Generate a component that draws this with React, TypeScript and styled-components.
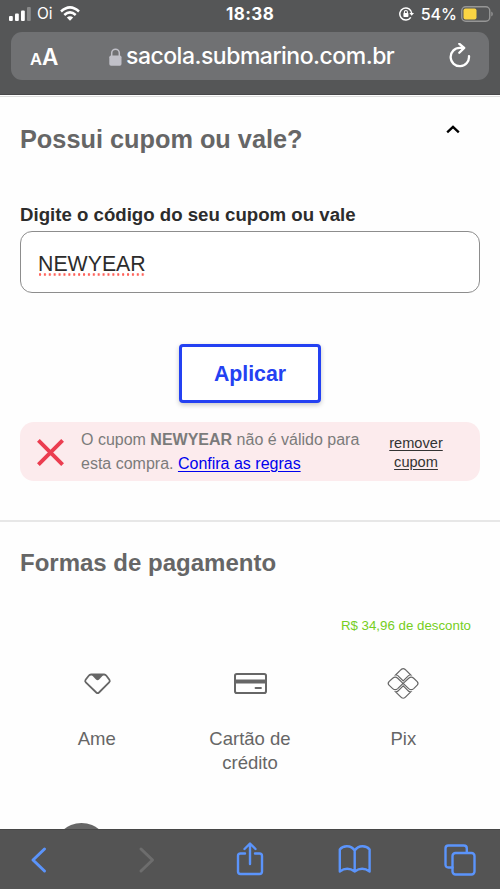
import React from "react";
import styled, { createGlobalStyle } from "styled-components";

const GlobalStyle = createGlobalStyle`
  * { box-sizing: border-box; }
  body { margin: 0; background: #fff; font-family: "Liberation Sans", Arial, sans-serif; }
  h2, p { margin: 0; }
  svg { display: block; flex: none; }
  button { padding: 0; border: 0; background: none; font: inherit; color: inherit; }
`;

const Screen = styled.div`
  width: 500px;
  height: 889px;
  display: flex;
  flex-direction: column;
  overflow: hidden;
  background: #fefefe;
`;

const BrowserHeader = styled.header`
  height: 95px;
  flex: none;
  background: #555657;
  border-bottom: 1px solid #48484a;
  color: #fff;
  font-family: Inter, sans-serif;
`;

const StatusBar = styled.div`
  height: 32px;
  padding: 0 7px 5px 9px;
  display: grid;
  grid-template-columns: 1fr 50px 1fr;
  align-items: center;
`;

const StatusGroup = styled.div<{ $end?: boolean }>`
  display: flex;
  align-items: center;
  justify-content: ${(p) => (p.$end ? "flex-end" : "flex-start")};
`;

const Carrier = styled.span`
  margin: 0 7px 0 6px;
  font-size: 15.5px;
  line-height: 20px;
`;

const Clock = styled.span`
  font-size: 17px;
  line-height: 20px;
  font-weight: 700;
  letter-spacing: 0.4px;
  white-space: nowrap;
`;

const BatteryLevel = styled.span`
  margin: 0 4px 0 7px;
  font-size: 16px;
  line-height: 20px;
  font-weight: 500;
`;

const AddressBar = styled.div`
  height: 48px;
  margin: 0 11px;
  padding: 0 18px 0 19px;
  border-radius: 11px;
  background: #707173;
  display: grid;
  grid-template-columns: 79px 1fr 22px;
  align-items: center;
`;

const TextSize = styled.button`
  padding-top: 3px;
  display: flex;
  align-items: baseline;
  font-size: 22.5px;
  font-weight: 600;
  line-height: 28px;
`;

const SmallA = styled.span`
  font-size: 16.5px;
`;

const Address = styled.div`
  display: flex;
  align-items: center;
  gap: 4px;
`;

const Host = styled.span`
  font-size: 23px;
  line-height: 28px;
  font-weight: 500;
  letter-spacing: -0.5px;
  white-space: nowrap;
`;

const Page = styled.main`
  height: 734px;
  flex: none;
  display: flex;
  flex-direction: column;
  background: #fefefe;
`;

const CouponSection = styled.section`
  height: 426px;
  margin-top: 1px;
  padding: 0 20px;
  border-top: 1px solid #ddd;
  border-bottom: 2px solid #e7e7e7;
  display: flex;
  flex-direction: column;
`;

const SectionHeader = styled.div`
  height: 107px;
  padding: 27px 20px 0 0;
  display: flex;
  justify-content: space-between;
`;

const Title = styled.h2<{ $compact?: boolean }>`
  color: #666;
  font-size: ${(p) => (p.$compact ? "24px" : "25.3px")};
  line-height: 30px;
  font-weight: 700;
`;

const CouponLabel = styled.label`
  height: 27px;
  color: #2c2c2c;
  font-size: 18.65px;
  line-height: 22px;
  font-weight: 700;
`;

const CouponField = styled.div`
  height: 62px;
  padding: 18px 17px;
  border: 1px solid #8d8d8d;
  border-radius: 12px;
  background: #fff;
  display: flex;
`;

const CouponCode = styled.span`
  height: 26px;
  color: #2c2c2c;
  font-size: 21.3px;
  line-height: 28px;
  background: radial-gradient(circle at 2px 1.5px, #ff6159 1px, transparent 1.5px) 0 100% / 4.9px 3px repeat-x;
`;

const ApplyButton = styled.button`
  width: 142px;
  height: 59px;
  margin: 51px 0 19px;
  align-self: center;
  border: 3px solid #2441f2;
  border-radius: 4px;
  background: #fff;
  box-shadow: 0 2px 5px rgba(0, 0, 0, 0.22);
  color: #2441f2;
  font-size: 21.3px;
  line-height: 26px;
  font-weight: 700;
`;

const ErrorBanner = styled.div`
  height: 59px;
  padding: 2px 28px 0 17px;
  border-radius: 14px;
  background: #fcebed;
  display: flex;
  align-items: center;
`;

const ErrorText = styled.p`
  width: 290px;
  margin: 0 0 1px 17px;
  color: #7b7b7b;
  font-size: 16px;
  line-height: 24px;
  white-space: nowrap;
`;

const RulesLink = styled.a`
  color: #0000ee;
  text-decoration: underline;
  text-underline-offset: 2px;
`;

const RemoveButton = styled.button`
  width: 72px;
  margin-left: auto;
  color: #333;
  font-size: 14.6px;
  line-height: 18.5px;
  text-decoration: underline;
  text-underline-offset: 2px;
`;

const PaymentSection = styled.section`
  flex: 1;
  padding: 26px 20px 0;
  display: flex;
  flex-direction: column;
`;

const Discount = styled.p`
  margin: 40px 9px 0 0;
  align-self: flex-end;
  color: #76ce22;
  font-size: 13.3px;
  line-height: 15px;
`;

const MethodList = styled.div`
  margin-top: 33px;
  display: grid;
  grid-template-columns: repeat(3, 1fr);
`;

const Method = styled.button`
  display: flex;
  flex-direction: column;
  align-items: center;
  justify-content: flex-start;
  color: #666;
`;

const MethodName = styled.span`
  width: 100px;
  margin-top: 25px;
  font-size: 18.5px;
  line-height: 24px;
`;

const StepDisc = styled.div`
  width: 55px;
  height: 6px;
  margin: auto 0 0 34px;
  overflow: hidden;

  &::before {
    content: "";
    display: block;
    width: 55px;
    height: 55px;
    border-radius: 50%;
    background: #666;
  }
`;

const Toolbar = styled.nav`
  height: 60px;
  flex: none;
  padding: 0 24px 0 30px;
  background: #545454;
  border-top: 1px solid #474747;
  display: grid;
  grid-template-columns: 108px 98px 102px 106px 1fr;
  align-items: center;
  justify-items: start;
`;

const ToolButton = styled.button`
  color: #5b94fb;
`;

const SignalIcon = () => (
  <svg width="22" height="14" fill="#fff">
    <rect x="0" y="9" width="3.8" height="5" rx="1" />
    <rect x="6" y="6.5" width="3.8" height="7.5" rx="1" />
    <rect x="12" y="3.5" width="3.8" height="10.5" rx="1" />
    <rect x="18" y="0" width="3.8" height="14" rx="1" opacity=".3" />
  </svg>
);

const WifiIcon = () => (
  <svg width="20" height="15" viewBox="0 0 20 15" fill="none" stroke="#fff" strokeWidth="2.5">
    <path d="M1 5.5Q10-2.8 19 5.5M4.3 9Q10 3.7 15.7 9" />
    <path d="M10 14.8 6.8 11.5Q10 8.8 13.2 11.5Z" fill="#fff" stroke="none" />
  </svg>
);

const RotationLockIcon = () => (
  <svg width="15" height="14" viewBox="0 0 15 14" fill="none" stroke="#fff" strokeWidth="1.5">
    <path d="M11.8 10.3A6 6 0 1 1 12.8 6.5" />
    <path d="m10.3 6 2.4 2.8L15 6Z" fill="#fff" stroke="none" />
    <path d="M5.4 6.5V5a1.5 1.5 0 0 1 3 0v1.5" strokeWidth="1.1" />
    <rect x="4.4" y="6.1" width="5" height="3.9" rx=".7" fill="#fff" stroke="none" />
  </svg>
);

const BatteryIcon = () => (
  <svg width="32" height="16" viewBox="0 0 32 16">
    <rect x=".75" y=".75" width="28" height="14.5" rx="4" fill="none" stroke="#969696" strokeWidth="1.4" />
    <rect x="2.5" y="2.5" width="13" height="11" rx="2" fill="#fad443" />
    <path d="M30.3 5.5q1.5.7 1.5 2.5t-1.5 2.5Z" fill="#969696" />
  </svg>
);

const LockIcon = () => (
  <svg width="13" height="20" viewBox="0 -2 13 20">
    <path d="M2.7 8V5a3.8 3.8 0 0 1 7.6 0v3" fill="none" stroke="#c0c0c8" strokeWidth="1.5" />
    <rect x=".3" y="7.5" width="12.2" height="10.3" rx="1.7" fill="#c0c0c8" />
  </svg>
);

const ReloadIcon = () => (
  <svg width="22" height="26" viewBox="0 0 22 26" fill="none" stroke="#fff" strokeWidth="2.3" strokeLinecap="round" strokeLinejoin="round">
    <path d="M20 13.2A9.2 9.2 0 1 1 10.8 4.8h4.2M10.3.8 15.2 4.9 10.3 9.8" />
  </svg>
);

const CollapseIcon = () => (
  <svg width="14" height="10" viewBox="0 -1 14 10">
    <path d="m1.2 7.4 5.8-5.6 5.8 5.6" fill="none" stroke="#000" strokeWidth="2.3" />
  </svg>
);

const CrossIcon = () => (
  <svg width="27" height="27" viewBox="0 0 27 27">
    <path d="m1.4 1.4 24.2 24.2M25.6 1.4 1.4 25.6" stroke="#eb3d50" strokeWidth="3.9" />
  </svg>
);

const AmeIcon = () => (
  <svg width="34" height="36" viewBox="0 0 34 36">
    <path d="M11.1 8.5h13q1.4 0 2.3 1.2l3 4q1 1.4-.3 2.6L19 26.5q-1.4 1.2-2.7 0L5.8 16.3q-1.2-1.2-.2-2.5l3.1-4Q9.6 8.5 11.1 8.5Z" fill="none" stroke="#666" strokeWidth="1.8" />
    <path d="M11.3 8.5h12.5l-4.7 5.1q-1.6 1.4-3.1 0Z" fill="#666" />
  </svg>
);

const CardIcon = () => (
  <svg width="34" height="36" viewBox="0 0 34 36">
    <rect x="2" y="8" width="31" height="19" rx="1.8" fill="none" stroke="#666" strokeWidth="2" />
    <path d="M2 15.5h31" stroke="#666" strokeWidth="4" />
    <path d="M22.5 22h5.5" stroke="#666" strokeWidth="1.8" strokeLinecap="round" />
  </svg>
);

const PixIcon = () => (
  <svg width="34" height="36" viewBox="0 .6 34 36" fill="none" stroke="#666" strokeWidth="1.2">
    <path d="M9.6 9.6 14.2 5Q17.2 1.3 20.2 5L24.8 9.6Q22.8 9.4 21.5 11.2L17.2 15.6 12.9 11.2Q11.6 9.4 9.6 9.6Z" />
    <path d="M9.6 26.4 14.2 31Q17.2 34.7 20.2 31L24.8 26.4Q22.8 26.6 21.5 24.8L17.2 20.4 12.9 24.8Q11.6 26.6 9.6 26.4Z" />
    <path d="M17 18 11.7 12.8Q9.2 10.6 6.7 12.8L3 16.2Q1.4 18 3 19.8L6.7 23.2Q9.2 25.4 11.7 23.2Z" />
    <path d="M17.2 18 22.7 12.8Q25.2 10.6 27.7 12.8L31.2 16.2Q32.8 18 31.2 19.8L27.7 23.2Q25.2 25.4 22.7 23.2Z" />
  </svg>
);

const ArrowIcon = ({ forward = false }: { forward?: boolean }) => (
  <svg width="18" height="28" viewBox="0 0 18 28" fill="none" stroke={forward ? "#6d6d6d" : "#5b94fb"} strokeWidth="3" strokeLinecap="round" strokeLinejoin="round">
    <path d={forward ? "m3 3 11.5 11L3 25" : "M14.5 3 3 14l11.5 11"} />
  </svg>
);

const ToolIcon = ({ kind }: { kind: "share" | "book" | "tabs" }) => (
  <svg width={kind === "share" ? 28 : kind === "book" ? 34 : 32} height="36" viewBox={`0 0 ${kind === "share" ? 28 : kind === "book" ? 34 : 32} 36`} fill="none" stroke="currentColor" strokeWidth="2.4" strokeLinecap="round" strokeLinejoin="round">
    {kind === "share" && <path d="M9 11.5H4.5Q2 11.5 2 14v15.5Q2 32 4.5 32h19q2.5 0 2.5-2.5V14q0-2.5-2.5-2.5H19M14 22V2M8.5 7 14 1.5 19.5 7" />}
    {kind === "book" && <path d="M16.7 8.5C13 2.8 5 3.2 1.8 7.5V29.5Q9.2 24.2 16.7 29.5 24.2 24.2 31.6 29.5V7.5C28.4 3.2 20.4 2.8 16.7 8.5V29.5" />}
    {kind === "tabs" && <><path d="M8.5 25.5H4.4Q1.5 25.5 1.5 22.5V6.5Q1.5 3.5 4.4 3.5h15.4q3 0 3 3v4" /><rect x="8.5" y="11" width="22" height="21.5" rx="3" /></>}
  </svg>
);

const methods = [
  { name: "Ame", Icon: AmeIcon },
  { name: "Cartão de crédito", Icon: CardIcon },
  { name: "Pix", Icon: PixIcon },
];

export default function App() {
  return (
    <>
      <GlobalStyle />
      <Screen>
        <BrowserHeader>
          <StatusBar>
            <StatusGroup><SignalIcon /><Carrier>Oi</Carrier><WifiIcon /></StatusGroup>
            <Clock>18:38</Clock>
            <StatusGroup $end><RotationLockIcon /><BatteryLevel>54%</BatteryLevel><BatteryIcon /></StatusGroup>
          </StatusBar>
          <AddressBar>
            <TextSize><SmallA>A</SmallA>A</TextSize>
            <Address><LockIcon /><Host>sacola.submarino.com.br</Host></Address>
            <ReloadIcon />
          </AddressBar>
        </BrowserHeader>
        <Page>
          <CouponSection>
            <SectionHeader><Title>Possui cupom ou vale?</Title><CollapseIcon /></SectionHeader>
            <CouponLabel>Digite o código do seu cupom ou vale</CouponLabel>
            <CouponField><CouponCode>NEWYEAR</CouponCode></CouponField>
            <ApplyButton>Aplicar</ApplyButton>
            <ErrorBanner>
              <CrossIcon />
              <ErrorText>O cupom <b>NEWYEAR</b> não é válido para<br />esta compra. <RulesLink>Confira as regras</RulesLink></ErrorText>
              <RemoveButton>remover<br />cupom</RemoveButton>
            </ErrorBanner>
          </CouponSection>
          <PaymentSection>
            <Title $compact>Formas de pagamento</Title>
            <Discount>R$ 34,96 de desconto</Discount>
            <MethodList>
              {methods.map(({ name, Icon }) => (
                <Method key={name}><Icon /><MethodName>{name}</MethodName></Method>
              ))}
            </MethodList>
            <StepDisc />
          </PaymentSection>
        </Page>
        <Toolbar>
          <ToolButton><ArrowIcon /></ToolButton>
          <ToolButton><ArrowIcon forward /></ToolButton>
          <ToolButton><ToolIcon kind="share" /></ToolButton>
          <ToolButton><ToolIcon kind="book" /></ToolButton>
          <ToolButton><ToolIcon kind="tabs" /></ToolButton>
        </Toolbar>
      </Screen>
    </>
  );
}
